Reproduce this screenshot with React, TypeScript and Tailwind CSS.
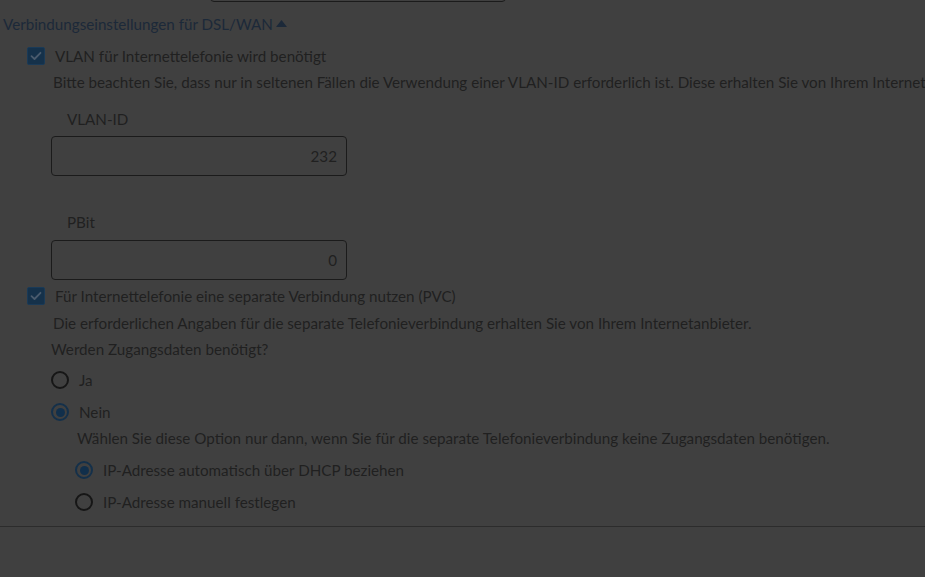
import React from 'react';

const Checkbox: React.FC<{ label: string }> = ({ label }) => (
  <div className="flex items-center h-[26px] gap-[10px]">
    <span className="flex items-center justify-center w-[18px] h-[18px] rounded-[2px] bg-[#15314a] border border-[#1a3a57]">
      <svg width="12" height="10" viewBox="0 0 12 10" fill="none">
        <path d="M1.5 5.2 L4.5 8 L10.5 1.8" stroke="#4a5b6d" strokeWidth="1.8" strokeLinecap="round" strokeLinejoin="round" />
      </svg>
    </span>
    <span>{label}</span>
  </div>
);

const Radio: React.FC<{ label: string; checked?: boolean }> = ({ label, checked }) => (
  <div className="flex items-center h-[26px] mt-[6px] gap-[10px]">
    {checked ? (
      <span className="flex items-center justify-center w-[18px] h-[18px] rounded-full border-2 border-[#14304a]">
        <span className="w-[9px] h-[9px] rounded-full bg-[#112f4b]" />
      </span>
    ) : (
      <span className="w-[18px] h-[18px] rounded-full border-2 border-[#161616]" />
    )}
    <span>{label}</span>
  </div>
);

const NumberField: React.FC<{ value: string }> = ({ value }) => (
  <div className="flex items-center justify-end w-[296px] h-10 px-[9px] border border-[#1b1b1b] rounded-[4px]">
    {value}
  </div>
);

export default function App() {
  return (
    <div
      className="w-[925px] h-[577px] overflow-hidden whitespace-nowrap bg-[#404040] text-[#202020] text-[15.2px] leading-[26px]"
      style={{ fontFamily: 'Lato, "Open Sans", sans-serif' }}
    >
      {/* field from the section above, scrolled out of view */}
      <div className="-mt-[38px] ml-[210px] w-[296px] h-10 border border-[#1b1b1b] rounded-[4px]" />

      <div className="mt-[9px] pl-[3px] flex items-center gap-[3px] text-[#1c2939]">
        <span>Verbindungseinstellungen für DSL/WAN</span>
        <svg width="11" height="7" viewBox="0 0 11 7" className="mb-[2px]">
          <polygon points="5.5,0 11,7 0,7" fill="#1c2939" />
        </svg>
      </div>

      <div className="pl-[27px] mt-[6px]">
        <Checkbox label="VLAN für Internettelefonie wird benötigt" />
        <div className="pl-[26px]">
          Bitte beachten Sie, dass nur in seltenen Fällen die Verwendung einer VLAN-ID erforderlich ist. Diese erhalten Sie von Ihrem Internetanbieter.
        </div>
        <div className="pl-[24px]">
          <div className="pl-[16px] mt-[11px]">VLAN-ID</div>
          <div className="mt-[4px]">
            <NumberField value="232" />
          </div>
          <div className="pl-[16px] mt-[33px]">PBit</div>
          <div className="mt-[5px]">
            <NumberField value="0" />
          </div>
        </div>

        <div className="mt-[3px]">
          <Checkbox label="Für Internettelefonie eine separate Verbindung nutzen (PVC)" />
        </div>
        <div className="pl-[26px] mt-px">
          Die erforderlichen Angaben für die separate Telefonieverbindung erhalten Sie von Ihrem Internetanbieter.
        </div>
        <div className="pl-[24px]">
          <div>Werden Zugangsdaten benötigt?</div>
          <div className="-mt-px">
            <Radio label="Ja" />
            <Radio label="Nein" checked />
          </div>
          <div className="pl-[24px]">
            <div className="pl-[2px]">
              Wählen Sie diese Option nur dann, wenn Sie für die separate Telefonieverbindung keine Zugangsdaten benötigen.
            </div>
            <Radio label="IP-Adresse automatisch über DHCP beziehen" checked />
            <Radio label="IP-Adresse manuell festlegen" />
          </div>
        </div>
      </div>

      <div className="mt-[11px] border-t border-[#2c2c2c]" />
    </div>
  );
}
